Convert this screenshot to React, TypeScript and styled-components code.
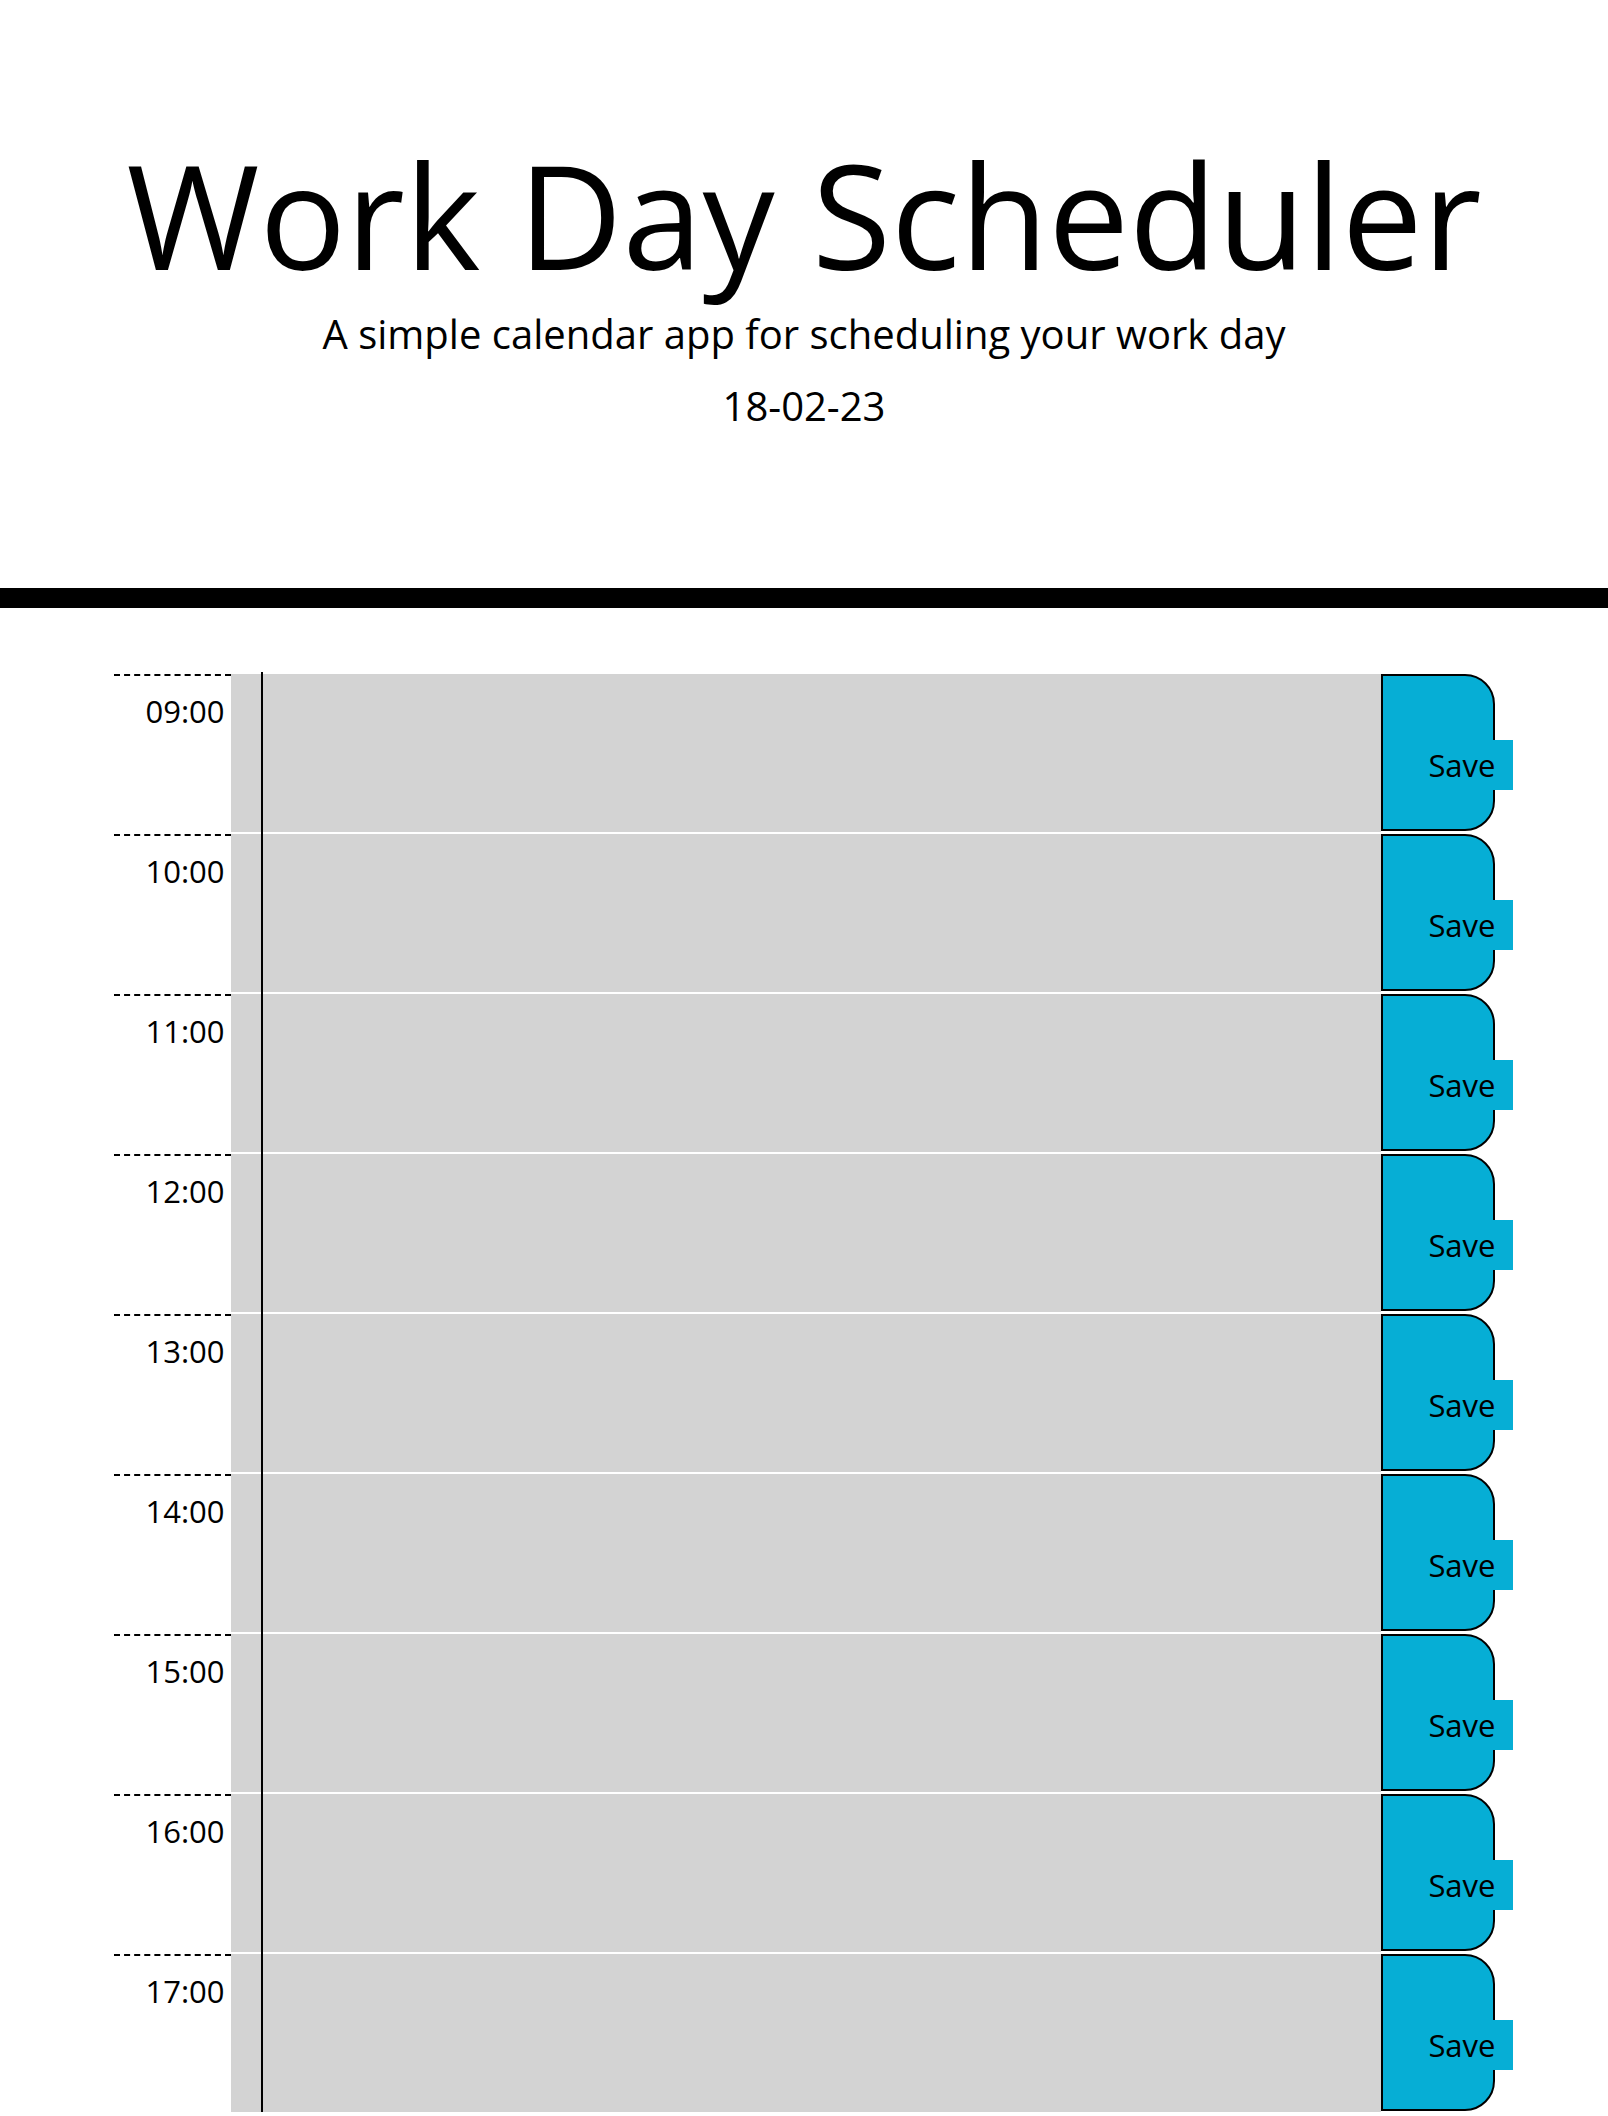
import React from 'react';
import styled, { createGlobalStyle } from 'styled-components';

const GlobalStyle = createGlobalStyle`
  html, body {
    margin: 0;
    padding: 0;
    background: #ffffff;
  }
  body {
    font-family: "Open Sans", "Noto Sans", sans-serif;
    color: #000000;
  }
  * {
    box-sizing: border-box;
  }
`;

const Header = styled.header`
  text-align: center;
  padding: 128px 0 152px;
  border-bottom: 20px solid #000000;
`;

const Title = styled.h1`
  margin: 0;
  font-size: 144px;
  line-height: 172px;
  font-weight: 400;
`;

const Lead = styled.p<{ $gap: number }>`
  margin: ${(p) => p.$gap}px 0 0;
  font-size: 40px;
  line-height: 60px;
  font-weight: 400;
`;

const Schedule = styled.main`
  width: 1381px;
  margin: 64px auto 0;
`;

const Row = styled.div`
  display: flex;
  height: 160px;
  border-top: 2px solid #ffffff;
`;

const Hour = styled.div`
  width: 117px;
  flex-shrink: 0;
  border-top: 2px dashed #000000;
  padding: 12px 6px 0 0;
  text-align: right;
  font-size: 31px;
  line-height: 46px;
`;

const Cell = styled.div`
  flex: 1;
  background: #d3d3d3;
  padding-left: 30px;
`;

const Note = styled.textarea`
  display: block;
  width: 100%;
  height: calc(100% + 2px);
  margin-top: -2px;
  border: none;
  border-left: 2px solid #000000;
  background: transparent;
  resize: none;
  outline: none;
  padding: 10px;
  font-family: inherit;
  font-size: 28px;
  color: #000000;
`;

const SaveBtn = styled.button`
  width: 114px;
  height: 157px;
  flex-shrink: 0;
  display: flex;
  justify-content: flex-end;
  align-items: flex-start;
  padding: 64px 0 0;
  background: #06aed5;
  border: 2px solid #000000;
  border-radius: 0 30px 30px 0;
  overflow: visible;
  cursor: pointer;
`;

const SaveLabel = styled.span`
  background: #06aed5;
  margin-right: -20px;
  padding: 0 17px 0 0;
  font-family: "Open Sans", "Noto Sans", sans-serif;
  font-size: 31px;
  line-height: 50px;
  color: #000000;
`;

const hours = ['09:00', '10:00', '11:00', '12:00', '13:00', '14:00', '15:00', '16:00', '17:00'];

export default function App() {
  return (
    <>
      <GlobalStyle />
      <Header>
        <Title>Work Day Scheduler</Title>
        <Lead $gap={4}>A simple calendar app for scheduling your work day</Lead>
        <Lead $gap={12}>18-02-23</Lead>
      </Header>
      <Schedule>
        {hours.map((h) => (
          <Row key={h}>
            <Hour>{h}</Hour>
            <Cell>
              <Note aria-label={`Notes for ${h}`} />
            </Cell>
            <SaveBtn type="button">
              <SaveLabel>Save</SaveLabel>
            </SaveBtn>
          </Row>
        ))}
      </Schedule>
    </>
  );
}
